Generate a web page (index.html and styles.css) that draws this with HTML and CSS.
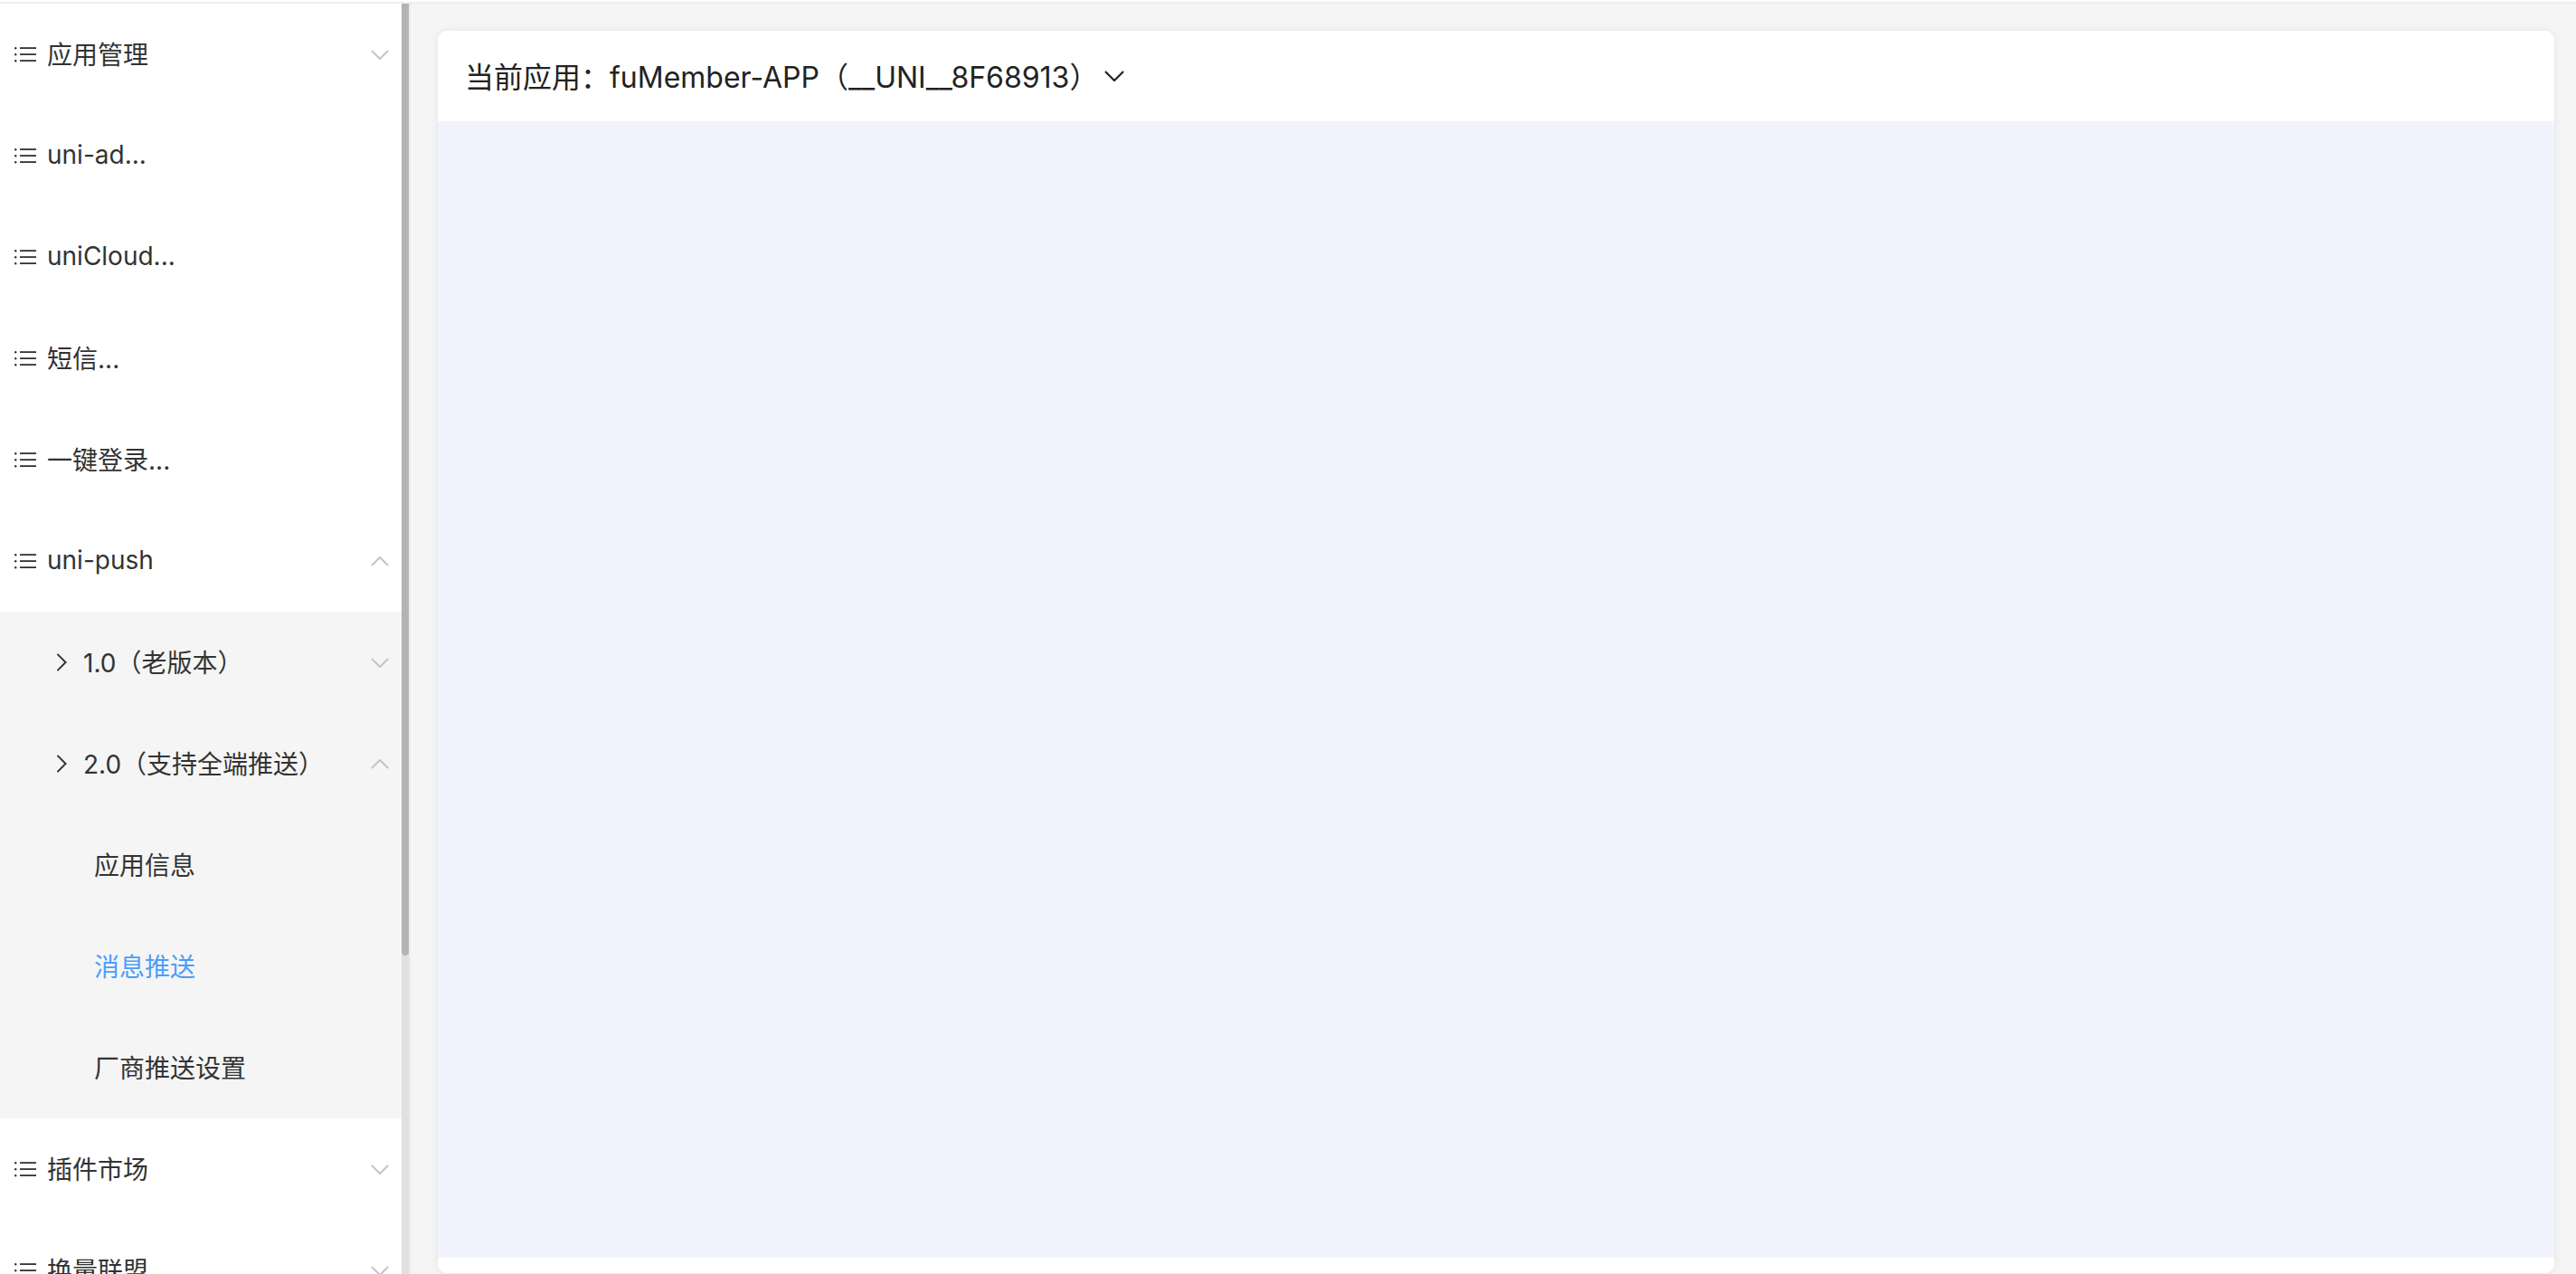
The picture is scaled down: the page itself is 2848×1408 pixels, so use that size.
FILE: index.html
```html
<!DOCTYPE html>
<html lang="zh-CN">
<head>
    <meta charset="UTF-8">
    <title>uni-push</title>
    <link rel="stylesheet" href="styles.css">
</head>
<body>
    <svg class="icon-defs" width="0" height="0">
        <symbol id="icon-list" viewBox="0 0 24 18">
            <rect x="0" y="1" width="2.4" height="2.4" rx="1.2" fill="currentColor"/>
            <rect x="0" y="8" width="2.4" height="2.4" rx="1.2" fill="currentColor"/>
            <rect x="0" y="15" width="2.4" height="2.4" rx="1.2" fill="currentColor"/>
            <rect x="6" y="1.2" width="18" height="1.8" fill="currentColor"/>
            <rect x="6" y="8.2" width="18" height="1.8" fill="currentColor"/>
            <rect x="6" y="15.2" width="18" height="1.8" fill="currentColor"/>
        </symbol>
        <symbol id="icon-down" viewBox="0 0 22 12">
            <path d="M1 1l10 10L21 1" fill="none" stroke="currentColor" stroke-width="2.2"/>
        </symbol>
        <symbol id="icon-up" viewBox="0 0 22 12">
            <path d="M1 11L11 1l10 10" fill="none" stroke="currentColor" stroke-width="2.2"/>
        </symbol>
        <symbol id="icon-right" viewBox="0 0 12 22">
            <path d="M1 1l10 10L1 21" fill="none" stroke="currentColor" stroke-width="2.2"/>
        </symbol>
    </svg>

    <div class="top-line"></div>
    <div class="layout">
        <div class="sidebar">
            <div class="menu">
                <div class="menu-row">
                    <svg class="list-icon"><use href="#icon-list"/></svg>
                    <span class="menu-text">应用管理</span>
                    <svg class="fold-icon"><use href="#icon-down"/></svg>
                </div>
                <div class="menu-row">
                    <svg class="list-icon"><use href="#icon-list"/></svg>
                    <span class="menu-text">uni-ad...</span>
                </div>
                <div class="menu-row">
                    <svg class="list-icon"><use href="#icon-list"/></svg>
                    <span class="menu-text">uniCloud...</span>
                </div>
                <div class="menu-row">
                    <svg class="list-icon"><use href="#icon-list"/></svg>
                    <span class="menu-text">短信...</span>
                </div>
                <div class="menu-row">
                    <svg class="list-icon"><use href="#icon-list"/></svg>
                    <span class="menu-text">一键登录...</span>
                </div>
                <div class="menu-row">
                    <svg class="list-icon"><use href="#icon-list"/></svg>
                    <span class="menu-text">uni-push</span>
                    <svg class="fold-icon"><use href="#icon-up"/></svg>
                </div>
                <div class="submenu">
                    <div class="menu-row sub-row">
                        <svg class="arrow-icon"><use href="#icon-right"/></svg>
                        <span class="menu-text">1.0（老版本）</span>
                        <svg class="fold-icon"><use href="#icon-down"/></svg>
                    </div>
                    <div class="menu-row sub-row">
                        <svg class="arrow-icon"><use href="#icon-right"/></svg>
                        <span class="menu-text">2.0（支持全端推送）</span>
                        <svg class="fold-icon"><use href="#icon-up"/></svg>
                    </div>
                    <div class="menu-row leaf-row">
                        <span class="menu-text">应用信息</span>
                    </div>
                    <div class="menu-row leaf-row active">
                        <span class="menu-text">消息推送</span>
                    </div>
                    <div class="menu-row leaf-row">
                        <span class="menu-text">厂商推送设置</span>
                    </div>
                </div>
                <div class="menu-row">
                    <svg class="list-icon"><use href="#icon-list"/></svg>
                    <span class="menu-text">插件市场</span>
                    <svg class="fold-icon"><use href="#icon-down"/></svg>
                </div>
                <div class="menu-row">
                    <svg class="list-icon"><use href="#icon-list"/></svg>
                    <span class="menu-text">换量联盟</span>
                    <svg class="fold-icon"><use href="#icon-down"/></svg>
                </div>
            </div>
            <div class="scroll-track">
                <div class="scroll-thumb"></div>
            </div>
        </div>

        <div class="main">
            <div class="card">
                <div class="card-header">
                    <span class="app-name">当前应用：fuMember-APP（__UNI__8F68913）</span>
                    <svg class="app-arrow"><use href="#icon-down"/></svg>
                </div>
                <div class="card-body"></div>
                <div class="card-footer"></div>
            </div>
        </div>
    </div>
</body>
</html>
```

FILE: styles.css
```css
html, body {
    margin: 0;
    height: 100%;
    overflow: hidden;
}
body {
    font-family: Inter, "Noto Sans CJK SC", sans-serif;
    background-color: #f5f5f5;
    color: #333;
}
.icon-defs {
    display: block;
    height: 0;
}
.top-line {
    height: 2px;
    background-color: #fff;
    border-bottom: 2px solid #eee;
}
.layout {
    display: flex;
    height: 1404px;
}
.sidebar {
    display: flex;
    flex: none;
    width: 454px;
    height: 100%;
    overflow: hidden;
}
.menu {
    width: 444px;
    flex: none;
    background-color: #fff;
}
.menu-row {
    display: flex;
    align-items: center;
    height: 112px;
    padding-left: 16px;
    padding-right: 14px;
    box-sizing: border-box;
    font-size: 28px;
}
.menu-text {
    flex: 1;
    padding-bottom: 2px;
    white-space: nowrap;
}
.list-icon {
    width: 24px;
    height: 18px;
    margin-right: 12px;
    color: #333;
}
.fold-icon {
    width: 20px;
    height: 11px;
    color: #c0c4cc;
}
.submenu {
    background-color: #f5f5f5;
}
.sub-row {
    padding-left: 62px;
}
.arrow-icon {
    width: 12px;
    height: 20px;
    margin-right: 18px;
    color: #333;
}
.leaf-row {
    padding-left: 104px;
}
.active {
    color: #4a9ef9;
}
.scroll-track {
    width: 8px;
    flex: none;
    background-color: #e0e0e0;
    border-right: 2px solid #ececec;
}
.scroll-thumb {
    height: 1052px;
    background-color: #b4b4b4;
    border-radius: 0 0 4px 4px;
}
.main {
    flex: 1;
    padding: 30px 24px 0 30px;
    min-width: 0;
}
.card {
    height: 1373px;
    display: flex;
    flex-direction: column;
    background-color: #fff;
    border-radius: 10px;
    box-shadow: 0 0 8px rgba(0,0,0,0.08);
    overflow: hidden;
}
.card-header {
    display: flex;
    align-items: center;
    height: 100px;
    flex: none;
    padding-left: 30px;
    font-size: 32px;
    color: #222;
}
.app-name {
    padding-bottom: 2px;
}
.app-arrow {
    width: 22px;
    height: 12px;
    margin-left: 7px;
    color: #222;
}
.card-body {
    flex: 1;
    background-color: #f1f4fc;
}
.card-footer {
    height: 17px;
    flex: none;
}
```
